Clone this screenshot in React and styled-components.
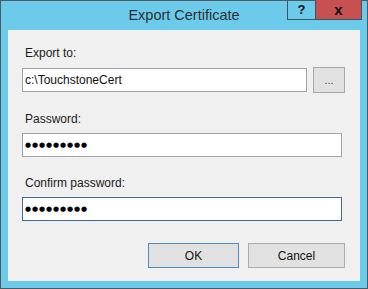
import React from 'react';
import styled, { createGlobalStyle } from 'styled-components';

const GlobalStyle = createGlobalStyle`
    body {
        margin: 0;
        font-family: "Liberation Sans", Arial, sans-serif;
    }
`;

const Window = styled.div`
    width: 368px;
    height: 289px;
    box-sizing: border-box;
    border: 1px solid #4d5a61;
    background-color: #6ccbea;
    display: flex;
    flex-direction: column;
`;

const TitleBar = styled.div`
    height: 29px;
    display: grid;
    grid-template-columns: 1fr auto 1fr;
    align-items: start;
`;

const Title = styled.div`
    grid-column: 2;
    font-size: 14.5px;
    line-height: 29px;
    color: #2a2f33;
`;

const Controls = styled.div`
    grid-column: 3;
    justify-self: end;
    display: flex;
    margin-right: 5px;
    margin-top: -1px;
    border: 1px solid #3e5561;
    border-top: none;
    height: 19px;
`;

const CaptionButton = styled.div`
    width: ${props => props.wide ? '45px' : '27px'};
    height: 19px;
    display: flex;
    align-items: center;
    justify-content: center;
    font-size: ${props => props.close ? '15px' : '13px'};
    font-weight: bold;
    color: #111;
    background-color: ${props => props.close ? '#c75050' : 'transparent'};
    border-left: ${props => props.close ? '1px solid #3e5561' : 'none'};
`;

const Client = styled.div`
    flex: 1;
    margin: 0 7px 7px 7px;
    background-color: #f0f0f0;
    padding: 15px 15px 0 14px;
    display: flex;
    flex-direction: column;
`;

const Label = styled.div`
    font-size: 12px;
    line-height: 16px;
    color: #1b1b1b;
    margin-left: 3px;
    margin-top: ${props => props.first ? '0' : '18px'};
    margin-bottom: 6px;
`;

const Row = styled.div`
    display: flex;
    align-items: center;
    gap: 6px;
    padding-right: ${props => props.inset ? '3px' : '0'};
`;

const Field = styled.div`
    box-sizing: border-box;
    height: 24px;
    flex: 1;
    background-color: #fff;
    border: 1px solid ${props => props.focused ? '#3f6b99' : '#a3a3a3'};
    padding: 0 2px;
    display: flex;
    align-items: center;
    font-size: 12px;
    color: #111;
    white-space: nowrap;
`;

const Dots = styled.span`
    font-family: "DejaVu Sans", sans-serif;
    font-size: 7px;
    letter-spacing: 0.9px;
    color: #000;
`;

const Browse = styled.div`
    box-sizing: border-box;
    width: 32px;
    height: 26px;
    background-color: #e1e1e1;
    border: 1px solid #a8a8a8;
    display: flex;
    align-items: center;
    justify-content: center;
    font-size: 11px;
    color: #4a3f6a;
`;

const Buttons = styled.div`
    display: flex;
    justify-content: flex-end;
    gap: 9px;
    margin-top: 22px;
`;

const Button = styled.div`
    box-sizing: border-box;
    width: ${props => props.w}px;
    height: 25px;
    background-color: #e1e1e1;
    border: 1px solid ${props => props.primary ? '#4d8cc8' : '#acacac'};
    display: flex;
    align-items: center;
    justify-content: center;
    font-size: 12px;
    color: #111;
`;

const App = () => {
    return (
        <>
            <GlobalStyle />
            <Window>
                <TitleBar>
                    <Title>Export Certificate</Title>
                    <Controls>
                        <CaptionButton>?</CaptionButton>
                        <CaptionButton wide close>x</CaptionButton>
                    </Controls>
                </TitleBar>
                <Client>
                    <Label first>Export to:</Label>
                    <Row>
                        <Field>c:\TouchstoneCert</Field>
                        <Browse>...</Browse>
                    </Row>
                    <Label>Password:</Label>
                    <Row inset>
                        <Field><Dots>●●●●●●●●●</Dots></Field>
                    </Row>
                    <Label>Confirm password:</Label>
                    <Row inset>
                        <Field focused><Dots>●●●●●●●●●</Dots></Field>
                    </Row>
                    <Buttons>
                        <Button w={91} primary>OK</Button>
                        <Button w={97}>Cancel</Button>
                    </Buttons>
                </Client>
            </Window>
        </>
    );
};

export default App;
